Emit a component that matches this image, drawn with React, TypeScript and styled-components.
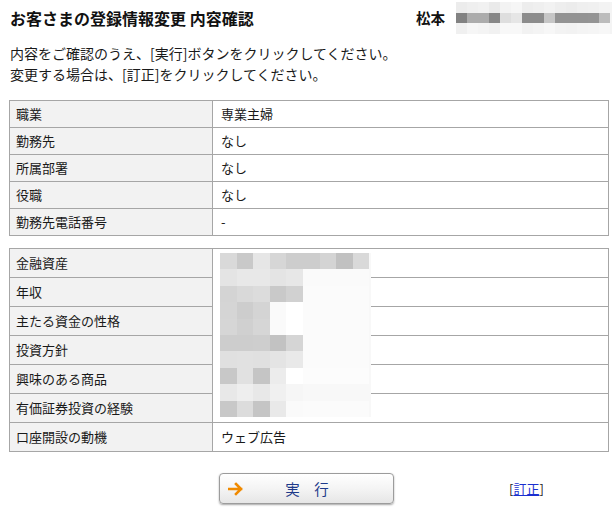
import React from 'react';
import styled, { createGlobalStyle } from 'styled-components';

const GlobalStyle = createGlobalStyle`
  html, body {
    margin: 0;
    padding: 0;
    background: #fff;
  }

  body {
    font-family: "Noto Sans CJK JP", "Liberation Sans", sans-serif;
    color: #222;
  }
`;

const Page = styled.div`
  width: 612px;
  height: 512px;
  overflow: hidden;
  padding: 0 4px 0 9px;
  box-sizing: border-box;
`;

const Header = styled.header`
  display: flex;
  align-items: center;
  height: 35px;
  margin-right: -4px;
`;

const Title = styled.h1`
  flex: 1;
  margin: 0;
  padding-left: 1px;
  font-size: 16px;
  font-weight: 700;
  line-height: 20px;
  color: #111;
`;

const UserName = styled.span`
  font-size: 14.5px;
  font-weight: 700;
  line-height: 20px;
  color: #111;
`;

const Mosaic = styled.div<{ $cols: number; $cell: number; $rows: number }>`
  display: grid;
  grid-template-columns: repeat(${({ $cols, $cell }) => `${$cols}, ${$cell}px`});
  grid-auto-rows: ${({ $rows }) => $rows}px;
`;

const HeaderMosaic = styled(Mosaic)`
  width: 156px;
  margin-left: 11px;
  align-self: flex-start;
  margin-top: 2px;
  background: #f4f4f4;
`;

const Block = styled.span<{ $shade: string }>`
  background: ${({ $shade }) => $shade};
`;

const Intro = styled.p`
  margin: 8px 0 0 1px;
  font-size: 14px;
  line-height: 21px;
  color: #1a1a1a;
`;

const Sheet = styled.div<{ $gap: number }>`
  position: relative;
  margin-top: ${({ $gap }) => $gap}px;
`;

const Table = styled.table`
  width: 600px;
  border-collapse: collapse;
  table-layout: fixed;
  border: 1px solid #a6a6a6;
`;

const LabelCell = styled.th<{ $h: number }>`
  width: 190px;
  height: ${({ $h }) => $h}px;
  padding: 0 6px;
  border: 1px solid #a6a6a6;
  background: #f2f2f2;
  text-align: left;
  font-weight: 400;
  font-size: 13px;
  line-height: 16px;
  color: #1a1a1a;
`;

const ValueCell = styled.td<{ $h: number }>`
  height: ${({ $h }) => $h}px;
  padding: 0 8px;
  border: 1px solid #a6a6a6;
  font-size: 13px;
  line-height: 16px;
  color: #1a1a1a;
`;

const Mask = styled.div`
  position: absolute;
  left: 204px;
  top: 2px;
  width: 158px;
  height: 168px;
  padding: 3px 0 0 7px;
  box-sizing: border-box;
  background: #fff;
`;

const MaskInner = styled(Mosaic)`
  background: #f8f8f8;
`;

const Actions = styled.div`
  display: flex;
  align-items: center;
  margin-top: 21px;
  padding-left: 210px;
`;

const RunButton = styled.button`
  display: flex;
  align-items: center;
  width: 175px;
  height: 31px;
  padding: 0 23px 0 8px;
  box-sizing: border-box;
  border: 1px solid #9c9c9c;
  border-radius: 4px;
  background: linear-gradient(#ffffff, #f3f3f3 55%, #e6e6e6);
  box-shadow: 0 1px 2px rgba(0, 0, 0, 0.35);
  font-family: inherit;
  cursor: pointer;
`;

const ButtonLabel = styled.span`
  flex: 1;
  text-align: center;
  font-size: 14.5px;
  line-height: 20px;
  color: #1e3a8a;
`;

const FixLink = styled.span`
  margin-left: 115px;
  font-size: 13px;
  line-height: 16px;
  color: #1a1a1a;

  a {
    color: #1a2fd0;
    text-decoration: underline;
  }
`;

const Arrow = () => (
  <svg width="16" height="14" viewBox="0 0 16 14">
    <path
      d="M1 7 H13 M8 2 L13 7 L8 12"
      fill="none"
      stroke="#f08a00"
      strokeWidth="2.6"
      strokeLinecap="square"
    />
  </svg>
);

const headerShades = [
  ['#ececec', '#efefef', '#f1f1f1', '#eaeaea', '#f3f3f3', '#f6f6f6', '#ededed', '#efefef', '#f2f2f2', '#eeeeee', '#ececec', '#efefef', '#f0f0f0', '#f3f3f3'],
  ['#828282', '#acacac', '#acacac', '#878787', '#dedede', '#e6e6e6', '#8c8c8c', '#8c8c8c', '#c6c6c6', '#939393', '#939393', '#939393', '#949494', '#bcbcbc'],
  ['#f0f0f0', '#f6f6f6', '#f4f4f4', '#f1f1f1', '#f8f8f8', '#f8f8f8', '#f2f2f2', '#f4f4f4', '#f7f7f7', '#f3f3f3', '#f2f2f2', '#f4f4f4', '#f5f5f5', '#f7f7f7'],
];

const maskShades = [
  ['#d9d9d9', '#c9c9c9', '#e6e6e6', '#d6d6d6', '#cdcdcd', '#cdcdcd', '#d4d4d4', '#c1c1c1', '#d9d9d9'],
  ['#e4e4e4', '#e8e8e8', '#e8e8e8', '#e4e4e4', '#e7e7e7', '#fafafa', '#fafafa', '#fafafa', '#fafafa'],
  ['#d4d4d4', '#d9d9d9', '#dcdcdc', '#c9c9c9', '#d1d1d1', '#fbfbfb', '#fbfbfb', '#fbfbfb', '#fbfbfb'],
  ['#d5d5d5', '#cdcdcd', '#d4d4d4', '#fafafa', '#ffffff', '#fbfbfb', '#fbfbfb', '#fbfbfb', '#fbfbfb'],
  ['#d6d6d6', '#d0d0d0', '#d6d6d6', '#fafafa', '#ffffff', '#fbfbfb', '#fbfbfb', '#fbfbfb', '#fbfbfb'],
  ['#cdcdcd', '#cdcdcd', '#cecece', '#c2c2c2', '#d5d5d5', '#fbfbfb', '#fbfbfb', '#fbfbfb', '#fbfbfb'],
  ['#e0e0e0', '#e1e1e1', '#e0e0e0', '#e4e4e4', '#e9e9e9', '#fbfbfb', '#fbfbfb', '#fbfbfb', '#fbfbfb'],
  ['#c8c8c8', '#e1e1e1', '#c5c5c5', '#ececec', '#ffffff', '#fcfcfc', '#fcfcfc', '#fcfcfc', '#fcfcfc'],
  ['#e8e8e8', '#eeeeee', '#e8e8e8', '#f0f0f0', '#f6f6f6', '#f8f8f8', '#f8f8f8', '#f8f8f8', '#f8f8f8'],
  ['#c8c8c8', '#dcdcdc', '#c5c5c5', '#e9e9e9', '#fafafa', '#fbfbfb', '#fbfbfb', '#fbfbfb', '#fbfbfb'],
];

const workRows = [
  { label: '職業', value: '専業主婦' },
  { label: '勤務先', value: 'なし' },
  { label: '所属部署', value: 'なし' },
  { label: '役職', value: 'なし' },
  { label: '勤務先電話番号', value: '-' },
];

const assetRows = [
  { label: '金融資産', value: '' },
  { label: '年収', value: '' },
  { label: '主たる資金の性格', value: '' },
  { label: '投資方針', value: '' },
  { label: '興味のある商品', value: '' },
  { label: '有価証券投資の経験', value: '' },
  { label: '口座開設の動機', value: 'ウェブ広告' },
];

const Blocks: React.FC<{ shades: string[][] }> = ({ shades }) => (
  <>
    {shades.flatMap((row, r) =>
      row.map((shade, c) => <Block key={`${r}-${c}`} $shade={shade} />)
    )}
  </>
);

export default function App() {
  return (
    <>
      <GlobalStyle />
      <Page>
        <Header>
          <Title>お客さまの登録情報変更 内容確認</Title>
          <UserName>松本</UserName>
          <HeaderMosaic $cols={14} $cell={11} $rows={10.5}>
            <Blocks shades={headerShades} />
          </HeaderMosaic>
        </Header>

        <Intro>
          内容をご確認のうえ、[実行]ボタンをクリックしてください。
          <br />
          変更する場合は、[訂正]をクリックしてください。
        </Intro>

        <Sheet $gap={15}>
          <Table>
            <tbody>
              {workRows.map((row) => (
                <tr key={row.label}>
                  <LabelCell $h={26}>{row.label}</LabelCell>
                  <ValueCell $h={26}>{row.value}</ValueCell>
                </tr>
              ))}
            </tbody>
          </Table>
        </Sheet>

        <Sheet $gap={12}>
          <Table>
            <tbody>
              {assetRows.map((row) => (
                <tr key={row.label}>
                  <LabelCell $h={28}>{row.label}</LabelCell>
                  <ValueCell $h={28}>{row.value}</ValueCell>
                </tr>
              ))}
            </tbody>
          </Table>
          <Mask>
            <MaskInner $cols={9} $cell={16.6} $rows={16.4}>
              <Blocks shades={maskShades} />
            </MaskInner>
          </Mask>
        </Sheet>

        <Actions>
          <RunButton type="button">
            <Arrow />
            <ButtonLabel>実　行</ButtonLabel>
          </RunButton>
          <FixLink>
            [<a href="#fix">訂正</a>]
          </FixLink>
        </Actions>
      </Page>
    </>
  );
}
